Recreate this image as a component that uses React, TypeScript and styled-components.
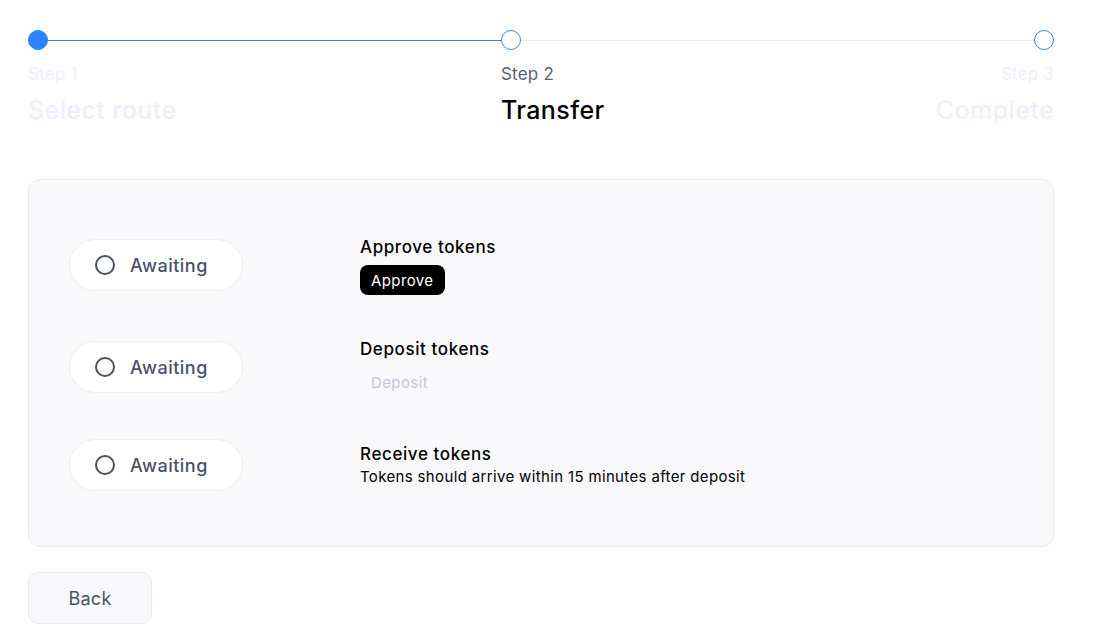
import React from 'react';
import styled, { createGlobalStyle } from 'styled-components';

const GlobalStyle = createGlobalStyle`
  body {
    margin: 0;
    background: #ffffff;
    font-family: Inter, "Open Sans", sans-serif;
  }
`;

const STEPS = [
  { label: 'Step 1', title: 'Select route' },
  { label: 'Step 2', title: 'Transfer' },
  { label: 'Step 3', title: 'Complete' },
];

const ACTIVE = 1;

const TASKS = [
  { title: 'Approve tokens', kind: 'approve' },
  { title: 'Deposit tokens', kind: 'deposit' },
  { title: 'Receive tokens', kind: 'receive' },
];

export default function App() {
  return (
    <>
      <GlobalStyle />
      <Page>
        <Stepper>
          {STEPS.map((step, idx) => {
            const last = idx === STEPS.length - 1;
            return (
              <StepCol key={step.label} $end={last}>
                <Track>
                  <Dot $filled={idx < ACTIVE} />
                  {!last && <Line $done={idx < ACTIVE} />}
                </Track>
                <StepLabel $active={idx === ACTIVE}>{step.label}</StepLabel>
                <StepTitle $active={idx === ACTIVE}>{step.title}</StepTitle>
              </StepCol>
            );
          })}
        </Stepper>

        <Panel>
          {TASKS.map((task) => (
            <TaskRow key={task.title}>
              <StatusPill>
                <StatusIcon />
                Awaiting
              </StatusPill>
              <TaskBody>
                <TaskTitle>{task.title}</TaskTitle>
                {task.kind === 'approve' && <ActionButton>Approve</ActionButton>}
                {task.kind === 'deposit' && <ActionButton disabled>Deposit</ActionButton>}
                {task.kind === 'receive' && (
                  <TaskNote>Tokens should arrive within 15 minutes after deposit</TaskNote>
                )}
              </TaskBody>
            </TaskRow>
          ))}
        </Panel>

        <BackButton>Back</BackButton>
      </Page>
    </>
  );
}

const Page = styled.div`
  width: 1026px;
  padding: 30px 0 0 28px;
`;

const Stepper = styled.div`
  display: grid;
  grid-template-columns: 473px 533px 20px;
`;

const StepCol = styled.div<{ $end: boolean }>`
  display: flex;
  flex-direction: column;
  align-items: ${(p) => (p.$end ? 'flex-end' : 'flex-start')};
`;

const Track = styled.div`
  display: flex;
  align-items: center;
  height: 20px;
  width: 100%;
`;

const Line = styled.div<{ $done: boolean }>`
  flex: 1;
  height: 1px;
  background: ${(p) => (p.$done ? '#2f7fe6' : '#e6eaf6')};
`;

const Dot = styled.div<{ $filled: boolean }>`
  width: 20px;
  height: 20px;
  box-sizing: border-box;
  border-radius: 50%;
  flex-shrink: 0;
  background: ${(p) => (p.$filled ? '#2a84fb' : '#ffffff')};
  border: 1.5px solid ${(p) => (p.$filled ? '#2a84fb' : '#3f86e2')};
`;

const StepLabel = styled.div<{ $active: boolean }>`
  margin-top: 12px;
  font-size: 17px;
  line-height: 24px;
  letter-spacing: 0.2px;
  white-space: nowrap;
  color: ${(p) => (p.$active ? '#5b6170' : '#edf0fa')};
`;

const StepTitle = styled.div<{ $active: boolean }>`
  margin-top: 8px;
  font-size: 25px;
  line-height: 32px;
  font-weight: 500;
  letter-spacing: 0.4px;
  white-space: nowrap;
  color: ${(p) => (p.$active ? '#000000' : '#edf0fa')};
`;

const Panel = styled.div`
  margin-top: 53px;
  padding: 55px 40px;
  background: #f9f9fc;
  border: 1px solid #ebebf1;
  border-radius: 12px;
  display: flex;
  flex-direction: column;
  gap: 42px;
`;

const TaskRow = styled.div`
  display: flex;
  align-items: center;
  gap: 117px;
`;

const StatusPill = styled.div`
  box-sizing: border-box;
  flex-shrink: 0;
  width: 174px;
  height: 52px;
  padding: 0 25px;
  display: flex;
  align-items: center;
  gap: 15px;
  background: #ffffff;
  border: 1px solid #ededf3;
  border-radius: 26px;
  font-size: 18px;
  font-weight: 500;
  letter-spacing: 0.5px;
  color: #4b5264;
`;

const StatusIcon = styled.span`
  width: 20px;
  height: 20px;
  box-sizing: border-box;
  border: 2px solid #4b5264;
  border-radius: 50%;
`;

const TaskBody = styled.div`
  display: flex;
  flex-direction: column;
  align-items: flex-start;
`;

const TaskTitle = styled.div`
  font-size: 17px;
  line-height: 24px;
  font-weight: 500;
  letter-spacing: 0.6px;
  color: #000000;
`;

const ActionButton = styled.button`
  margin-top: 6px;
  height: 30px;
  padding: 0 11px;
  border: none;
  border-radius: 8px;
  font-family: inherit;
  font-size: 15px;
  letter-spacing: 0.4px;
  background: #000000;
  color: #ffffff;

  &:disabled {
    background: transparent;
    color: #c3c8d6;
  }
`;

const TaskNote = styled.div`
  font-size: 15px;
  line-height: 22px;
  letter-spacing: 0.35px;
  color: #000000;
`;

const BackButton = styled.button`
  margin-top: 25px;
  width: 124px;
  height: 52px;
  background: #f8f8fc;
  border: 1px solid #ebebf1;
  border-radius: 10px;
  font-family: inherit;
  font-size: 18px;
  letter-spacing: 0.3px;
  color: #4b5264;
`;
